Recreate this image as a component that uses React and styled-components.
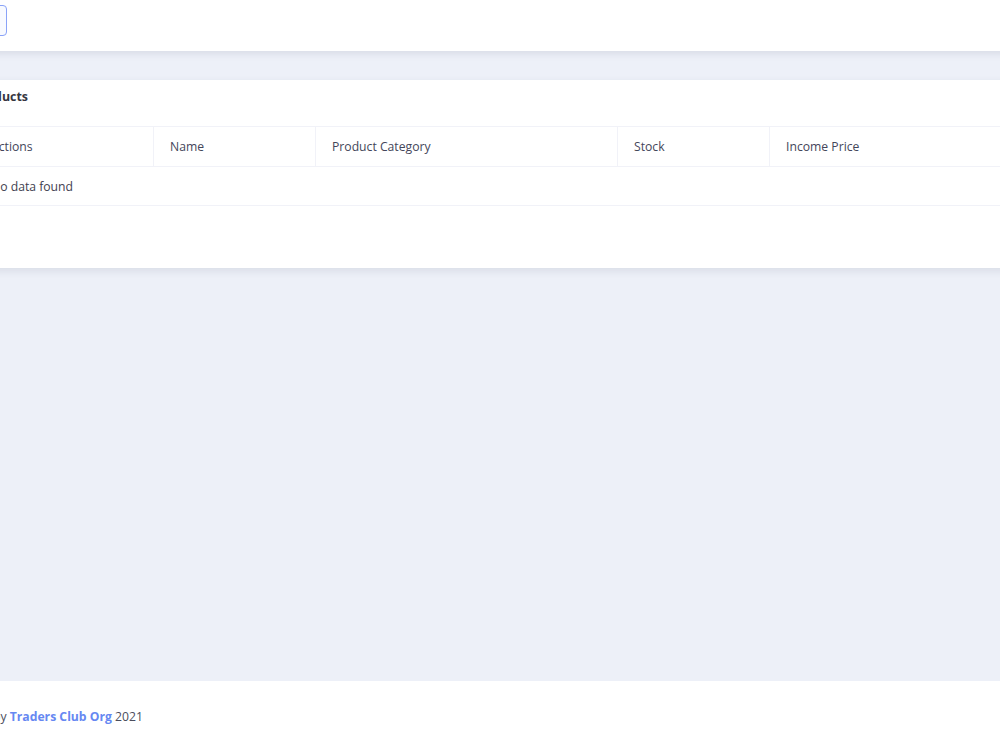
import React from "react";
import styled, { createGlobalStyle } from "styled-components";

const GlobalStyle = createGlobalStyle`
    html, body {
        margin: 0;
        padding: 0;
        overflow: hidden;
        background: #ffffff;
        font-family: "Open Sans", "Liberation Sans", sans-serif;
        font-size: 12.2px;
        color: #3f4150;
    }
`;

const Wrapper = styled.div`
    width: 1200px;
    margin-left: -45px;
    display: flex;
    flex-direction: column;
    min-height: 750px;
`;

const Header = styled.header`
    height: 51px;
    background: #ffffff;
    display: flex;
    align-items: flex-start;
    padding: 5px 0 0 12px;
    box-sizing: border-box;
    box-shadow: 0 2px 8px rgba(40, 50, 80, 0.12);
    position: relative;
    z-index: 2;
`;

const ToggleButton = styled.button`
    width: 40px;
    height: 31px;
    border: 1px solid #8aa3f8;
    border-radius: 4px;
    background: #f8faff;
    padding: 0;
`;

const Main = styled.main`
    background: #edf0f8;
    height: 630px;
    padding-top: 29px;
    box-sizing: border-box;
`;

const Card = styled.section`
    background: #ffffff;
    height: 188px;
    box-shadow: 0 3px 8px rgba(40, 50, 80, 0.1);
    display: flex;
    flex-direction: column;
`;

const CardTitle = styled.h2`
    margin: 0;
    padding: 8px 16px 20px 18px;
    line-height: 18px;
    font-size: 12.4px;
    font-weight: 700;
    color: #35363f;
`;

const Table = styled.div`
    margin: 0 20px;
    display: flex;
    flex-direction: column;
`;

const Row = styled.div`
    display: flex;
    height: 40px;
    border-top: 1px solid #f1f2f8;
    box-sizing: border-box;

    &:last-child {
        border-bottom: 1px solid #f1f2f8;
    }
`;

const HeadCell = styled.div`
    width: ${(p) => p.$width}px;
    flex-shrink: 0;
    padding-left: 16px;
    display: flex;
    align-items: center;
    box-sizing: border-box;
    border-left: ${(p) => (p.$first ? "none" : "1px solid #f1f2f8")};
    color: #44465a;
`;

const EmptyCell = styled.div`
    padding-left: 16px;
    display: flex;
    align-items: center;
    color: #3f4150;
`;

const Footer = styled.footer`
    background: #ffffff;
    flex: 1;
    padding: 27px 0 0 38px;
    line-height: 18px;
    color: #4b4d5c;
`;

const FooterLink = styled.a`
    color: #6688f2;
    font-weight: 700;
    text-decoration: none;
`;

const columns = [
    { label: "Actions", width: 178 },
    { label: "Name", width: 162 },
    { label: "Product Category", width: 302 },
    { label: "Stock", width: 152 },
    { label: "Income Price", width: 300 },
];

const App = () => {
    return (
        <>
            <GlobalStyle />
            <Wrapper>
                <Header>
                    <ToggleButton aria-label="menu" />
                </Header>
                <Main>
                    <Card>
                        <CardTitle>Products</CardTitle>
                        <Table>
                            <Row>
                                {columns.map((col, i) => (
                                    <HeadCell key={col.label} $width={col.width} $first={i === 0}>
                                        {col.label}
                                    </HeadCell>
                                ))}
                            </Row>
                            <Row>
                                <EmptyCell>No data found</EmptyCell>
                            </Row>
                        </Table>
                    </Card>
                </Main>
                <Footer>
                    by <FooterLink href="#">Traders Club Org</FooterLink> 2021
                </Footer>
            </Wrapper>
        </>
    );
};

export default App;
